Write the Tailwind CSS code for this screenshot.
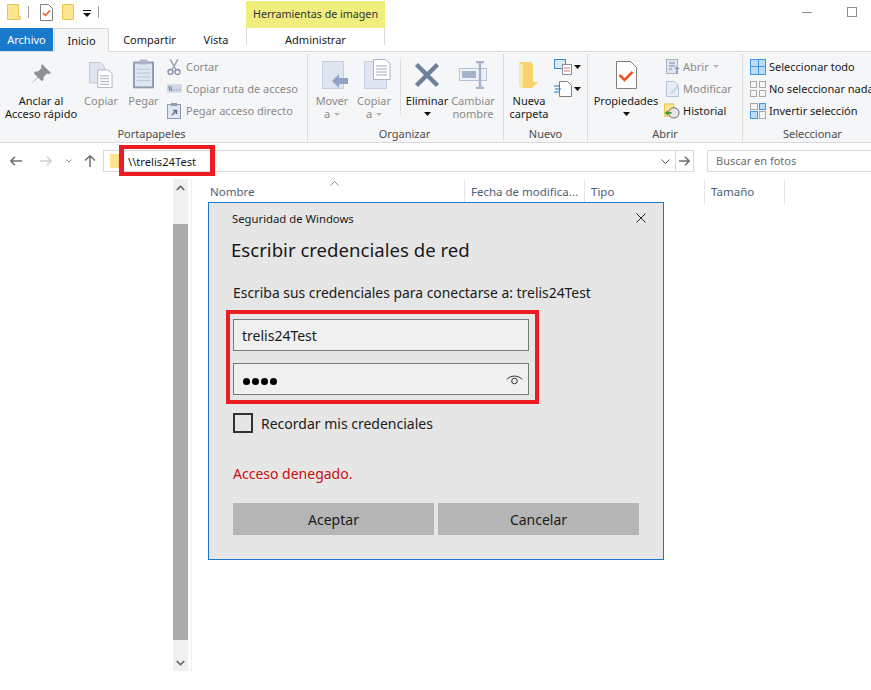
<!DOCTYPE html>
<html lang="es">
<head>
<meta charset="UTF-8">
<title>Escribir credenciales de red</title>
<script src="https://cdn.jsdelivr.net/npm/@tailwindcss/browser@4"></script>
</head>
<body class="bg-white text-[#1a1a1a] font-['Noto_Sans',sans-serif] text-[11px] leading-[15px] overflow-hidden">
<div class="relative w-[871px] h-[690px] overflow-hidden">

  <!-- barra de titulo -->
  <div class="h-[28px] flex items-start">
    <div class="w-[246px] h-[28px] flex items-center pl-[7px] pb-[4px]">
      <svg width="14" height="16" viewBox="0 0 14 16"><path d="M.5.500h11v12h1.800v3H.5z" fill="#fde58f" stroke="#e9c44f"/></svg>
      <div class="w-px h-[12px] bg-[#a0a0a0] ml-[7px]"></div>
      <svg class="ml-[11px]" width="13" height="17" viewBox="0 0 13 17"><path d="M.5.500h8l4 4v12H.5z" fill="#fff" stroke="#808080"/><path d="M3 9l2.500 2.500L10 6.500" fill="none" stroke="#e8551c" stroke-width="1.500"/></svg>
      <svg class="ml-[9px]" width="13" height="16" viewBox="0 0 13 16"><path d="M.5.500h11v15H.5z" fill="#fde58f" stroke="#e9c44f"/></svg>
      <svg class="ml-[8px] mt-[3px]" width="8" height="8" viewBox="0 0 8 8"><path d="M0 0h8v1H0zM0 3h8L4 7z" fill="#111"/></svg>
      <div class="w-px h-[12px] bg-[#a0a0a0] ml-[7px]"></div>
    </div>
    <div class="w-[139px] h-[27px] mt-px bg-[#f0ee7c] flex items-center justify-center text-[#333] text-[10.7px]">Herramientas de imagen</div>
    <div class="ml-auto flex items-center h-[24px] pr-[14px]">
      <div class="w-[10px] h-px bg-[#8c8c8c] mr-[35px]"></div>
      <div class="w-[10px] h-[10px] border border-[#8c8c8c]"></div>
    </div>
  </div>

  <!-- pestanas -->
  <div class="h-[24px] flex items-stretch border-b border-[#d9d9d9]">
    <div class="w-[53px] h-[23px] bg-[#1979ca] text-white flex items-center justify-center">Archivo</div>
    <div class="w-[55px] h-[24px] ml-px bg-[#f5f6f7] border border-b-0 border-[#d9d9d9] flex items-center justify-center">Inicio</div>
    <div class="w-[81px] flex items-center justify-center">Compartir</div>
    <div class="w-[52px] flex items-center justify-center">Vista</div>
    <div class="w-[139px] ml-[4px] h-[17px] border-x border-[#d9d9d9] pt-[4px] text-center">Administrar</div>
  </div>

  <!-- cinta -->
  <div class="h-[91px] bg-[#f5f6f7] border-b border-[#d9d9d9] flex pt-[2px] text-[#8a8a8a] leading-[13px]">
    <div class="w-[308px] border-r border-[#dcdcdc] h-[87px] flex flex-col">
      <div class="flex h-[73px]">
        <div class="w-[82px] flex flex-col items-center text-[#1a1a1a] text-center">
          <svg class="mt-[10px] mb-[10px]" width="20" height="20" viewBox="0 0 20 20"><path d="M11 0L20 9 18 10 16 9.500 12.500 13 12.500 16 10.500 17 7 13.500 0 20 6.500 13 3 9.500 4 7.500 7 7.500 10.500 4 10 2Z" fill="#8c9196"/></svg>
          <div>Anclar al<br>Acceso rápido</div>
        </div>
        <div class="w-[38px] flex flex-col items-center">
          <svg class="mt-[7px] mb-[5px]" width="24" height="28" viewBox="0 0 26 28"><path d="M.5.500h12l4 4v18H.5z" fill="#dfe6f2" stroke="#b8c4d6"/><path d="M9.500 8.500h11l4.500 4v15H9.500z" fill="#fff" stroke="#a9b4c4"/><path d="M12 15h10M12 18h10M12 21h10M12 24h10" stroke="#9aa8bc"/></svg>
          <div>Copiar</div>
        </div>
        <div class="w-[47px] flex flex-col items-center">
          <svg class="mt-[5px] mb-[5px]" width="21" height="30" viewBox="0 0 22 30"><rect x="1" y="3" width="20" height="26" fill="#dfe6f2" stroke="#8e9bb0" stroke-width="2"/><rect x="7" y="0" width="8" height="5" fill="#aab4c4"/><path d="M4 10h14M4 14h14M4 18h14M4 22h14" stroke="#b6c3d6"/></svg>
          <div>Pegar</div>
        </div>
        <div class="flex flex-col pt-[5px] gap-[7px] leading-[15px]">
          <div class="flex items-center h-[15px]"><svg class="mr-[5px]" width="14" height="16" viewBox="0 0 14 16"><path d="M3 0l6 11M11 0L5 11" stroke="#9aa5b4" stroke-width="1.500"/><circle cx="3.500" cy="13" r="2.500" fill="none" stroke="#7f8fa6" stroke-width="1.300"/><circle cx="10.500" cy="13" r="2.500" fill="none" stroke="#7f8fa6" stroke-width="1.300"/></svg>Cortar</div>
          <div class="flex items-center h-[15px]"><svg class="mr-[4px]" width="15" height="9" viewBox="0 0 16 9"><rect width="16" height="9" fill="#cfd8e6"/><path d="M2 2l1 5M4 2l1 5M7 6h1M10 6h1M13 6h1" stroke="#66758c"/></svg>Copiar ruta de acceso</div>
          <div class="flex items-center h-[15px]"><svg class="mr-[5px]" width="14" height="16" viewBox="0 0 14 16"><rect x=".5" y="1.500" width="13" height="14" fill="#dfe6f2" stroke="#8e9bb0"/><rect x="4" y="0" width="6" height="3" fill="#8e9bb0"/><path d="M5 12l4-4M6 7.500h3.500V11" stroke="#5f708a" stroke-width="1.400" fill="none"/></svg>Pegar acceso directo</div>
        </div>
      </div>
      <div class="text-center text-[#4d4d4d] leading-[15px] pr-[4px]">Portapapeles</div>
    </div>

    <div class="w-[196px] border-r border-[#dcdcdc] h-[87px] flex flex-col">
      <div class="flex h-[73px]">
        <div class="w-[48px] flex flex-col items-center text-center">
          <svg class="mt-[7px] mb-[5px] ml-[6px]" width="27" height="28" viewBox="0 0 27 28"><rect x=".5" y=".5" width="21" height="27" fill="#dfe6f2" stroke="#c5d1e3"/><path d="M10 20l7-7v4h9v6h-9v4z" fill="#8fa4c2"/></svg>
          <div>Mover<br>a <svg class="inline ml-[1px]" width="6" height="4" viewBox="0 0 6 4"><path d="M0 0h6L3 3z" fill="#b5b5b5"/></svg></div>
        </div>
        <div class="w-[36px] flex flex-col items-center text-center whitespace-nowrap">
          <svg class="mt-[5px] mb-[5px] ml-[6px]" width="27" height="30" viewBox="0 0 27 30"><rect x=".5" y="2.500" width="22" height="27" fill="#dfe6f2" stroke="#c5d1e3"/><path d="M9.500.500h12l4.500 4v16H9.500z" fill="#fff" stroke="#a9b4c4"/><path d="M12 7h11M12 10h11M12 13h11M12 16h11" stroke="#9aa8bc"/></svg>
          <div>Copiar<br>a <svg class="inline ml-[1px]" width="6" height="4" viewBox="0 0 6 4"><path d="M0 0h6L3 3z" fill="#b5b5b5"/></svg></div>
        </div>
        <div class="w-px h-[55px] mt-[6px] bg-[#dcdcdc] ml-[8px]"></div>
        <div class="w-[52px] flex flex-col items-center text-center text-[#1a1a1a]">
          <svg class="mt-[8px] mb-[6px]" width="26" height="26" viewBox="0 0 26 26"><path d="M2.500 2.500l21 21M23.500 2.500l-21 21" stroke="#6f809a" stroke-width="4.500"/></svg>
          <div>Eliminar</div>
          <svg class="mt-[5px]" width="7" height="4" viewBox="0 0 7 4"><path d="M0 0h7L3.500 4z" fill="#111"/></svg>
        </div>
        <div class="w-[40px] flex flex-col items-center text-center whitespace-nowrap">
          <svg class="mt-[7px] mb-[5px]" width="29" height="28" viewBox="0 0 29 28"><rect x=".5" y="7.500" width="27" height="12" fill="#eef2f8" stroke="#b4c2d6"/><rect x="3" y="10" width="14" height="7" fill="#a4b4cc"/><path d="M17 1h8M17 27h8M21 1v26" stroke="#a4b4cc" stroke-width="2.500"/></svg>
          <div>Cambiar<br>nombre</div>
        </div>
      </div>
      <div class="text-center text-[#4d4d4d] leading-[15px] pr-[2px]">Organizar</div>
    </div>

    <div class="w-[84px] border-r border-[#dcdcdc] h-[87px] flex flex-col">
      <div class="flex h-[73px]">
        <div class="w-[50px] flex flex-col items-center text-center text-[#1a1a1a]">
          <svg class="mt-[7px] mb-[5px]" width="20" height="28" viewBox="0 0 20 28"><path d="M0 1h12l2 3v17h5L13 27H3L0 24z" fill="#f6d36c"/><path d="M0 1l4 3v23l-4-3z" fill="#fbe7a6"/></svg>
          <div>Nueva<br>carpeta</div>
        </div>
        <div class="flex flex-col pt-[5px] gap-[6px]">
          <div class="flex items-center"><svg width="18" height="16" viewBox="0 0 18 16"><rect x=".5" y=".5" width="11" height="9" fill="#d9e8f6" stroke="#3f88c5"/><rect x="8.500" y="5.500" width="9" height="10" fill="#fff" stroke="#7f8fa6"/><path d="M10 9h6M10 12h6" stroke="#d97070"/></svg><svg class="ml-[2px]" width="7" height="4" viewBox="0 0 7 4"><path d="M0 0h7L3.500 4z" fill="#111"/></svg></div>
          <div class="flex items-center"><svg width="18" height="16" viewBox="0 0 18 16"><path d="M5.500.500h8l4 4v11h-12z" fill="#fff" stroke="#7f7f7f"/><path d="M0 5h6M1 8h6M0 11h5" stroke="#1979ca"/></svg><svg class="ml-[2px]" width="7" height="4" viewBox="0 0 7 4"><path d="M0 0h7L3.500 4z" fill="#111"/></svg></div>
        </div>
      </div>
      <div class="text-center text-[#4d4d4d] leading-[15px]">Nuevo</div>
    </div>

    <div class="w-[155px] border-r border-[#dcdcdc] h-[87px] flex flex-col">
      <div class="flex h-[73px]">
        <div class="w-[76px] flex flex-col items-center text-center text-[#1a1a1a]">
          <svg class="mt-[7px] mb-[5px]" width="21" height="28" viewBox="0 0 21 28"><path d="M.5.500h14l6 6v21H.5z" fill="#fff" stroke="#808080"/><path d="M3.500 14l5 5 8-8" fill="none" stroke="#e8551c" stroke-width="2.500"/></svg>
          <div>Propiedades</div>
          <svg class="mt-[5px]" width="7" height="4" viewBox="0 0 7 4"><path d="M0 0h7L3.500 4z" fill="#111"/></svg>
        </div>
        <div class="flex flex-col pt-[5px] gap-[7px] leading-[15px]">
          <div class="flex items-center h-[15px] ml-[2px]"><svg class="mr-[3px]" width="14" height="15" viewBox="0 0 14 15"><rect x=".5" y=".5" width="11" height="14" fill="#dfe6f2" stroke="#a9b4c4"/><path d="M3 4h6M3 7h6M3 10h3" stroke="#7f8fa6"/><path d="M10 15v-5H8l3-3 3 3h-2v5z" fill="#8fa4c2"/></svg>Abrir<svg class="ml-[4px]" width="6" height="4" viewBox="0 0 6 4"><path d="M0 0h6L3 3z" fill="#b5b5b5"/></svg></div>
          <div class="flex items-center h-[15px] ml-[2px]"><svg class="mr-[3px]" width="14" height="16" viewBox="0 0 14 16"><path d="M.5.500h8l4 4v11H.5z" fill="#e6edf7" stroke="#b4c2d6"/><path d="M4 12l7-8 2 1.500-7 8z" fill="#cfd8e6"/></svg>Modificar</div>
          <div class="flex items-center h-[15px] text-[#1a1a1a]"><svg class="mr-[3px]" width="16" height="16" viewBox="0 0 17 16"><rect x=".5" y=".5" width="10" height="13" fill="#fde58f" stroke="#e9c44f"/><circle cx="10.500" cy="10" r="5.500" fill="#e6e6e6" stroke="#666"/><path d="M1 10l3-3v2h4v2H4v2z" fill="#2e9e3a"/></svg>Historial</div>
        </div>
      </div>
      <div class="text-center text-[#4d4d4d] leading-[15px]">Abrir</div>
    </div>

    <div class="flex-1 h-[87px] flex flex-col text-[#1a1a1a] min-w-0">
      <div class="flex flex-col h-[73px] pt-[5px] gap-[7px] pl-[7px] whitespace-nowrap leading-[15px]">
        <div class="flex items-center h-[15px]"><span class="w-[16px] h-[16px] mr-[3px] grid grid-cols-2 gap-px p-px bg-[#3f97e6] shrink-0"><i class="bg-[#bcdcf8]"></i><i class="bg-[#bcdcf8]"></i><i class="bg-[#bcdcf8]"></i><i class="bg-[#bcdcf8]"></i></span>Seleccionar todo</div>
        <div class="flex items-center h-[15px]"><span class="w-[16px] h-[16px] mr-[3px] grid grid-cols-2 gap-[2px] shrink-0"><i class="border border-[#aaa]"></i><i class="border border-[#aaa]"></i><i class="border border-[#aaa]"></i><i class="border border-[#aaa]"></i></span>No seleccionar nada</div>
        <div class="flex items-center h-[15px]"><span class="w-[16px] h-[16px] mr-[3px] grid grid-cols-2 gap-[1px] shrink-0"><i class="border border-[#aaa]"></i><i class="border border-[#3f97e6] bg-[#bcdcf8]"></i><i class="border border-[#3f97e6] bg-[#bcdcf8]"></i><i class="border border-[#aaa]"></i></span>Invertir selección</div>
      </div>
      <div class="text-[#4d4d4d] pl-[40px] leading-[15px]">Seleccionar</div>
    </div>
  </div>

  <!-- barra de direcciones -->
  <div class="h-[35px] flex items-center pb-[1px] pt-[2px]">
    <div class="w-[103px] flex items-center pl-[10px]">
      <svg width="12" height="10" viewBox="0 0 12 10"><path d="M12 5H1M5 .7L.8 5 5 9.300" fill="none" stroke="#6d6d6d" stroke-width="1.500"/></svg>
      <svg class="ml-[18px]" width="12" height="10" viewBox="0 0 12 10"><path d="M0 5h11M7 .7L11.200 5 7 9.300" fill="none" stroke="#d0d0d0" stroke-width="1.500"/></svg>
      <svg class="ml-[14px]" width="6" height="4" viewBox="0 0 6 4"><path d="M.5.500L3 3 5.500.500" fill="none" stroke="#8c8c8c"/></svg>
      <svg class="ml-[12px]" width="12" height="12" viewBox="0 0 12 12"><path d="M6 12V1M1 5.500L6 .8l5 4.700" fill="none" stroke="#6d6d6d" stroke-width="1.500"/></svg>
    </div>
    <div class="w-[591px] h-[22px] border border-[#d9d9d9] flex items-center pl-[6px]">
      <div class="w-[10px] h-[14px] bg-[#fde58f] border-r-2 border-[#f3d873]"></div>
      <span class="ml-[8px] text-[#1a1a1a] text-[11.2px]">\\trelis24Test</span>
      <svg class="ml-auto mr-[5px]" width="9" height="5" viewBox="0 0 9 5"><path d="M.5.500l4 4 4-4" fill="none" stroke="#555"/></svg>
      <div class="w-px h-[20px] bg-[#d9d9d9]"></div>
      <svg class="mx-[3px]" width="11" height="10" viewBox="0 0 11 10"><path d="M0 5h10M6 .7L10.200 5 6 9.300" fill="none" stroke="#6d6d6d" stroke-width="1.500"/></svg>
    </div>
    <div class="ml-[13px] flex-1 h-[22px] border border-[#d9d9d9] border-r-0 flex items-center pl-[8px] pb-[1px] text-[#6d6d6d]">Buscar en fotos</div>
  </div>

  <!-- contenido -->
  <div class="flex h-[493px]">
    <div class="w-[173px]"></div>
    <div class="w-[15px] h-[492px] mt-[1px] bg-[#f0f0f0] flex flex-col items-center">
      <svg class="mt-[6px]" width="9" height="6" viewBox="0 0 9 6"><path d="M.8 5L4.500 1.300 8.200 5" fill="none" stroke="#606060" stroke-width="1.600"/></svg>
      <div class="w-full h-[416px] mt-[33px] bg-[#ababab]"></div>
      <svg class="mt-[20px]" width="9" height="6" viewBox="0 0 9 6"><path d="M.8 1l3.700 3.700L8.200 1" fill="none" stroke="#606060" stroke-width="1.600"/></svg>
    </div>
    <div class="w-px h-[492px] mt-[1px] ml-[3px] bg-[#f0f0f0]"></div>
    <div class="flex-1 relative text-[11.5px]">
      <div class="flex h-[25px] mt-[1px] text-[#4c607a] items-center">
        <div class="w-[273px] h-full border-r border-[#e5e5e5] flex items-center pl-[18px] relative">Nombre
          <svg class="absolute left-[138px] top-[2px]" width="9" height="5" viewBox="0 0 9 5"><path d="M.5 4.500l4-4 4 4" fill="none" stroke="#8c8c8c"/></svg>
        </div>
        <div class="w-[120px] h-full border-r border-[#e5e5e5] flex items-center pl-[6px]">Fecha de modifica...</div>
        <div class="w-[120px] h-full border-r border-[#e5e5e5] flex items-center pl-[6px]">Tipo</div>
        <div class="w-[80px] h-full border-r border-[#e5e5e5] flex items-center pl-[6px]">Tamaño</div>
      </div>
    </div>
  </div>

  <!-- recuadros rojos -->
  <div class="absolute left-[119px] top-[145px] w-[96px] h-[31px] border-x-[5px] border-y-[4px] border-[#ed1c24]"></div>
  <div class="absolute left-[226px] top-[310px] w-[313px] h-[94px] border-[4px] border-[#ed1c24] z-20"></div>

  <!-- dialogo -->
  <div class="absolute left-[208px] top-[202px] w-[456px] h-[358px] bg-[#e6e6e6] border border-[#1979ca] pl-[24px] pr-[24px] z-10">
    <div class="flex items-center justify-between h-[28px] mt-[1px]">
      <span class="text-[11.3px] -ml-px">Seguridad de Windows</span>
      <svg class="mr-[-7px]" width="10" height="10" viewBox="0 0 10 10"><path d="M.5.500l9 9M9.500.500l-9 9" stroke="#222"/></svg>
    </div>
    <div class="text-[18.6px] leading-[26px] mt-[5px] -ml-[2px]">Escribir credenciales de red</div>
    <div class="text-[13.9px] leading-[20px] mt-[20px]">Escriba sus credenciales para conectarse a: trelis24Test</div>
    <div class="w-[296px] h-[32px] mt-[16px] bg-[#f0f0f0] border border-[#7a7a7a] flex items-center pl-[8px] pt-[1px] text-[14px]">trelis24Test</div>
    <div class="w-[296px] h-[32px] mt-[12px] bg-[#f0f0f0] border border-[#7a7a7a] flex items-center pl-[9px] pr-[5px] justify-between">
      <span class="flex gap-[2px] mt-[5px]"><i class="w-[7px] h-[7px] rounded-full bg-black"></i><i class="w-[7px] h-[7px] rounded-full bg-black"></i><i class="w-[7px] h-[7px] rounded-full bg-black"></i><i class="w-[7px] h-[7px] rounded-full bg-black"></i></span>
      <svg width="17" height="11" viewBox="0 0 17 11"><path d="M.8 5.500C4 1 13 1 16.200 5.500" fill="none" stroke="#333"/><circle cx="8.500" cy="7" r="2.800" fill="none" stroke="#333"/></svg>
    </div>
    <label class="flex items-center mt-[18px] text-[14px]">
      <span class="w-[20px] h-[20px] border-2 border-[#333] mr-[8px]"></span>Recordar mis credenciales
    </label>
    <div class="text-[14px] leading-[20px] mt-[31px] text-[#c80f0f]">Acceso denegado.</div>
    <div class="flex gap-[4px] mt-[19px] w-[406px] text-[14px]">
      <button class="flex-1 h-[32px] bg-[#b5b5b5]">Aceptar</button>
      <button class="flex-1 h-[32px] bg-[#b5b5b5]">Cancelar</button>
    </div>
  </div>
</div>
</body>
</html>
